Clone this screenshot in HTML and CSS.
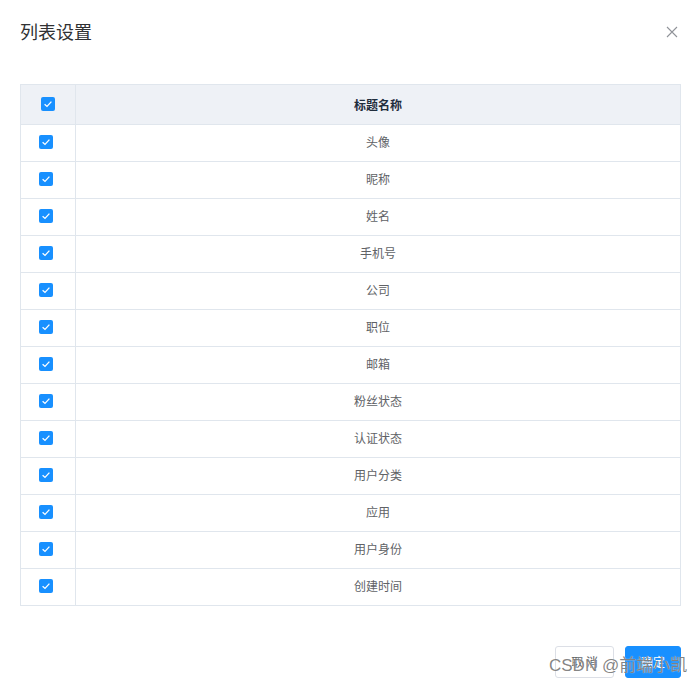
FILE: index.html
```html
<!DOCTYPE html>
<html lang="zh">
<head>
<meta charset="utf-8">
<link rel="stylesheet" href="styles.css">
</head>
<body>
<div class="dialog">
  <div class="dialog-header">
    <span class="dialog-title">列表设置</span>
    <button class="close-btn" aria-label="close">
      <svg width="12" height="12" viewBox="0 0 12 12"><path d="M1 1L11 11M11 1L1 11" stroke="#909399" stroke-width="1.1" fill="none"/></svg>
    </button>
  </div>
  <div class="dialog-body">
    <table class="list-table">
      <thead>
        <tr>
          <th class="col-check"><span class="checkbox head-check"><svg viewBox="0 0 14 14"><path d="M3.6 7.2L6 9.4L10.4 4.6" stroke="#fff" stroke-width="1.3" fill="none"/></svg></span></th>
          <th>标题名称</th>
        </tr>
      </thead>
      <tbody id="rows"></tbody>
    </table>
  </div>
  <div class="dialog-footer">
    <button class="btn btn-default">取 消</button>
    <button class="btn btn-primary">确定</button>
  </div>
</div>
<div class="watermark">CSDN @前端小凯</div>
<script>
  var names = ["头像","昵称","姓名","手机号","公司","职位","邮箱","粉丝状态","认证状态","用户分类","应用","用户身份","创建时间"];
  var tb = document.getElementById("rows");
  names.forEach(function(n){
    var tr = document.createElement("tr");
    tr.innerHTML = '<td class="col-check"><span class="checkbox"><svg viewBox="0 0 14 14"><path d="M3.6 7.2L6 9.4L10.4 4.6" stroke="#fff" stroke-width="1.3" fill="none"/></svg></span></td><td>' + n + '</td>';
    tb.appendChild(tr);
  });
</script>
</body>
</html>
```

FILE: styles.css
```css
html, body {
  margin: 0;
  padding: 0;
  background: #fff;
  font-family: "Noto Sans CJK SC", "Liberation Sans", sans-serif;
  overflow: hidden;
}

.dialog {
  width: 699px;
}

.dialog-header {
  padding: 20px 20px 10px;
  display: flex;
  align-items: center;
  justify-content: space-between;
  height: 24px;
}

.dialog-title {
  font-size: 18px;
  line-height: 24px;
  color: #303133;
  position: relative;
  top: -1px;
}

.close-btn {
  border: 0;
  background: none;
  padding: 0;
  width: 12px;
  height: 12px;
  margin-right: 1px;
  display: flex;
}

.close-btn svg {
  display: block;
}

.dialog-body {
  padding: 30px 20px 30px;
}

.list-table {
  width: 661px;
  border-collapse: collapse;
  table-layout: fixed;
  font-size: 12px;
}

.list-table th,
.list-table td {
  border: 1px solid #e0e6ed;
  text-align: center;
  padding: 0;
  line-height: 14px;
  vertical-align: middle;
}

.list-table th {
  background: #eef1f6;
  height: 39px;
  font-weight: bold;
  color: #1f2d3d;
}

.list-table td {
  height: 34px;
  padding-bottom: 2px;
  color: #606266;
}

.list-table .col-check {
  width: 54px;
}

.checkbox {
  display: block;
  width: 14px;
  height: 14px;
  border-radius: 2px;
  background: #1890ff;
  margin: 0 auto;
  position: relative;
  left: -2px;
}

.checkbox.head-check {
  left: 0;
  margin-top: -2px;
}

.checkbox svg {
  display: block;
  width: 14px;
  height: 14px;
}

.dialog-footer {
  padding: 10px 18px 20px 20px;
  display: flex;
  justify-content: flex-end;
  gap: 11px;
}

.btn {
  height: 32px;
  padding: 0 15px;
  font-size: 12px;
  border-radius: 3px;
  font-family: "Noto Sans CJK SC", sans-serif;
  line-height: 30px;
}

.btn-default {
  background: #fff;
  border: 1px solid #dcdfe6;
  color: #606266;
}

.btn-primary {
  background: #1890ff;
  border: 1px solid #1890ff;
  color: #fff;
}

.watermark {
  position: absolute;
  left: 549px;
  top: 655px;
  font-size: 17px;
  line-height: 22px;
  color: rgba(100, 100, 100, 0.8);
  text-shadow: 0 0 1px #fff;
  font-family: "Liberation Sans", "Noto Sans CJK SC", sans-serif;
  white-space: nowrap;
}
```
